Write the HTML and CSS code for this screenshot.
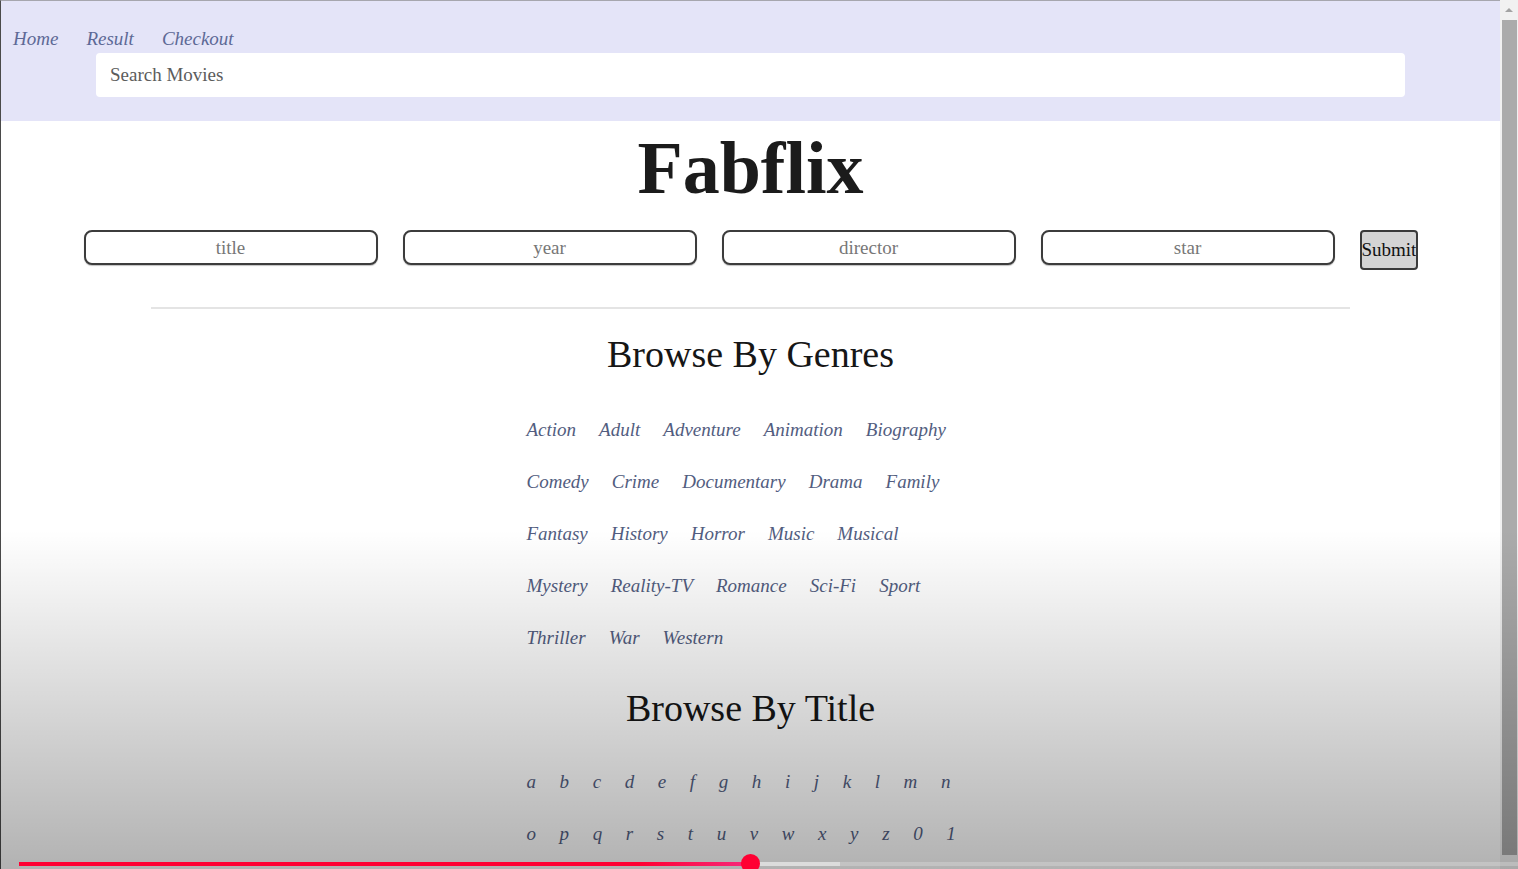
FILE: index.html
```html
<!DOCTYPE html>
<html lang="en">
<head>
<meta charset="utf-8">
<title>Fabflix</title>
<link rel="stylesheet" href="styles.css">
</head>
<body>
<div class="screen">
  <div class="page">
    <header class="topbar">
      <nav class="nav">
        <a href="#">Home</a>
        <a href="#">Result</a>
        <a href="#">Checkout</a>
      </nav>
      <div class="search">
        <input type="text" placeholder="Search Movies">
      </div>
    </header>
    <main class="main">
      <h1 class="logo">Fabflix</h1>
      <form class="adv">
        <input class="field" type="text" placeholder="title">
        <input class="field" type="text" placeholder="year">
        <input class="field" type="text" placeholder="director">
        <input class="field" type="text" placeholder="star">
        <button class="submit" type="button">Submit</button>
      </form>
      <hr class="rule">
      <h2 class="section">Browse By Genres</h2>
      <div class="links genres">
        <div class="row"><a href="#">Action</a><a href="#">Adult</a><a href="#">Adventure</a><a href="#">Animation</a><a href="#">Biography</a></div>
        <div class="row"><a href="#">Comedy</a><a href="#">Crime</a><a href="#">Documentary</a><a href="#">Drama</a><a href="#">Family</a></div>
        <div class="row"><a href="#">Fantasy</a><a href="#">History</a><a href="#">Horror</a><a href="#">Music</a><a href="#">Musical</a></div>
        <div class="row"><a href="#">Mystery</a><a href="#">Reality-TV</a><a href="#">Romance</a><a href="#">Sci-Fi</a><a href="#">Sport</a></div>
        <div class="row"><a href="#">Thriller</a><a href="#">War</a><a href="#">Western</a></div>
      </div>
      <h2 class="section title2">Browse By Title</h2>
      <div class="links letters">
        <div class="row"><a href="#">a</a><a href="#">b</a><a href="#">c</a><a href="#">d</a><a href="#">e</a><a href="#">f</a><a href="#">g</a><a href="#">h</a><a href="#">i</a><a href="#">j</a><a href="#">k</a><a href="#">l</a><a href="#">m</a><a href="#">n</a></div>
        <div class="row"><a href="#">o</a><a href="#">p</a><a href="#">q</a><a href="#">r</a><a href="#">s</a><a href="#">t</a><a href="#">u</a><a href="#">v</a><a href="#">w</a><a href="#">x</a><a href="#">y</a><a href="#">z</a><a href="#">0</a><a href="#">1</a></div>
      </div>
    </main>
  </div>
  <div class="scrollbar">
    <div class="arrow"></div>
    <div class="thumb"></div>
  </div>
  <div class="shade"></div>
  <div class="progress">
    <div class="played"></div>
    <div class="buffered"></div>
    <div class="rest"></div>
    <div class="knob"></div>
  </div>
</div>
</body>
</html>
```

FILE: styles.css
```css
html, body {
  margin: 0;
  padding: 0;
  overflow: hidden;
  background: #fff;
}

body {
  font-family: "Liberation Serif", "Times New Roman", serif;
  color: #1a1a1a;
}

.screen {
  position: relative;
  display: flex;
  width: 1518px;
  height: 869px;
  overflow: hidden;
}

.page {
  width: 1500px;
  height: 869px;
  box-sizing: border-box;
  border-left: 1px solid #4a4a4a;
  border-top: 1px solid #a6a6ae;
  background: #fff;
  overflow: hidden;
}

/* top bar */
.topbar {
  background: #e4e4f8;
  padding: 27px 0 24px;
}

.nav {
  display: flex;
  gap: 28px;
  padding-left: 12px;
  font-size: 19px;
  line-height: 22px;
}

.nav a {
  color: #5d6996;
  font-style: italic;
  text-decoration: none;
}

.search {
  padding: 3px 95px 0;
}

.search input {
  display: block;
  box-sizing: border-box;
  width: 100%;
  height: 44px;
  border: none;
  border-radius: 4px;
  background: #fff;
  padding: 0 14px;
  font-family: "Liberation Serif", serif;
  font-size: 19px;
  color: #555;
  outline: none;
}

.search input::placeholder {
  color: #5c5c5c;
}

/* main */
.main {
  display: flex;
  flex-direction: column;
  align-items: center;
}

.logo {
  margin: 10px 0 0;
  font-size: 74px;
  line-height: 74px;
  font-weight: bold;
  color: #1b1b1b;
}

.adv {
  display: flex;
  align-items: flex-start;
  gap: 25px;
  margin-top: 25px;
}

.field {
  box-sizing: border-box;
  width: 294px;
  height: 35px;
  border: 2px solid #3c3c3c;
  border-radius: 8px;
  background: #fff;
  text-align: center;
  font-family: "Liberation Serif", serif;
  font-size: 19px;
  color: #666;
  padding: 0;
  outline: none;
  box-shadow: 0 1px 1px rgba(0, 0, 0, 0.25);
}

.field::placeholder {
  color: #777;
}

.submit {
  box-sizing: border-box;
  width: 58px;
  height: 40px;
  padding: 0;
  border: 2px solid #3a3a3a;
  border-radius: 4px;
  background: #d4d4d4;
  font-family: "Liberation Serif", serif;
  font-size: 19px;
  color: #111;
  overflow: hidden;
  white-space: nowrap;
}

.rule {
  width: 80%;
  margin: 37px 0 0;
  border: none;
  height: 2px;
  background: #e4e4e4;
}

.section {
  margin: 26px 0 0;
  font-size: 38px;
  line-height: 38px;
  font-weight: normal;
  color: #161616;
}

.title2 {
  margin-top: 25px;
}

.links {
  width: 448px;
  margin-top: 31px;
  display: flex;
  flex-direction: column;
}

.row {
  display: flex;
  gap: 23px;
  height: 52px;
  line-height: 52px;
  font-size: 19px;
}

.row a {
  color: #525d80;
  font-style: italic;
  text-decoration: none;
}

.letters {
  margin-top: 29px;
}

.letters .row {
  gap: 23.6px;
}

/* fake scrollbar */
.scrollbar {
  width: 18px;
  height: 869px;
  background: #f1f1f1;
  display: flex;
  flex-direction: column;
  align-items: center;
}

.arrow {
  width: 0;
  height: 0;
  margin-top: 8px;
  border-left: 4px solid transparent;
  border-right: 4px solid transparent;
  border-bottom: 4px solid #a3a3a3;
}

.thumb {
  width: 15px;
  margin-top: 8px;
  margin-left: 1px;
  height: 835px;
  background: #ababab;
}

/* video overlays */
.shade {
  position: absolute;
  inset: 0;
  pointer-events: none;
  background: linear-gradient(to bottom, rgba(0, 0, 0, 0) 0%, rgba(0, 0, 0, 0) 61%, rgba(0, 0, 0, 0.3) 100%);
}

.progress {
  position: absolute;
  left: 19px;
  right: 0;
  bottom: 3px;
  height: 4px;
  display: flex;
}

.played {
  width: 731px;
  background: linear-gradient(to right, #ff0033 0%, #ff0033 85%, #f72a7c 100%);
}

.buffered {
  width: 90px;
  background: #dcdcdc;
}

.rest {
  flex: 1;
  background: rgba(255, 255, 255, 0.22);
}

.knob {
  position: absolute;
  left: 722px;
  top: -8px;
  width: 19px;
  height: 19px;
  border-radius: 50%;
  background: #ff0033;
}
```
